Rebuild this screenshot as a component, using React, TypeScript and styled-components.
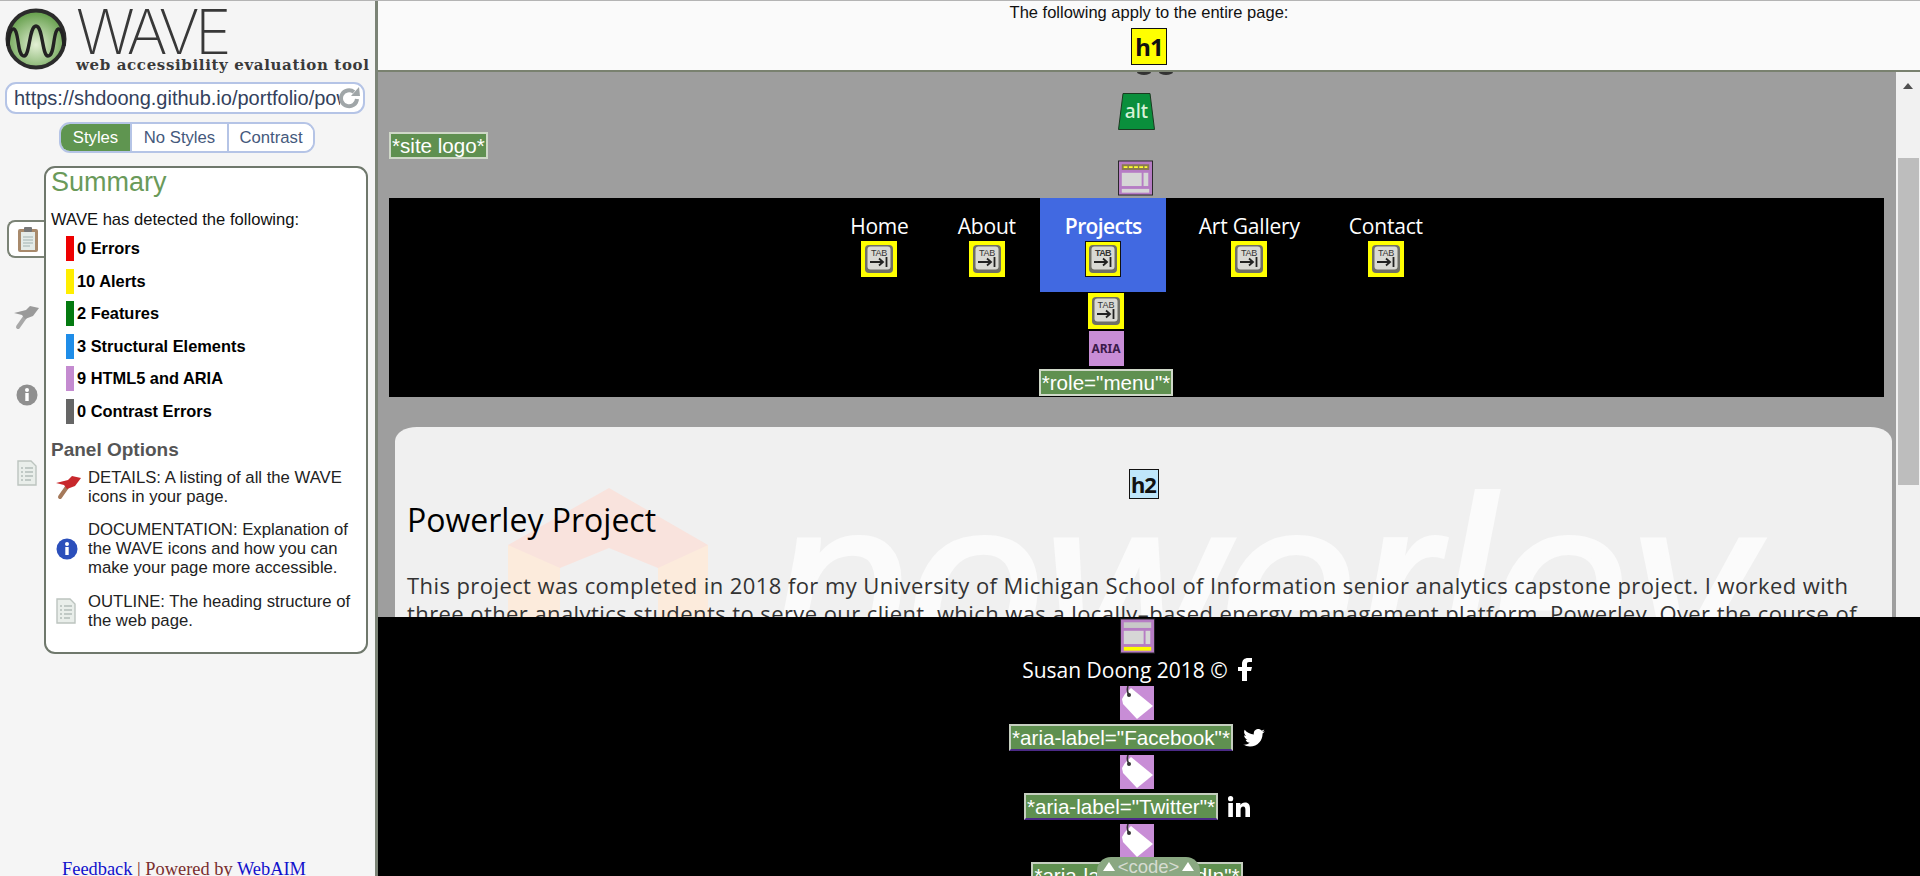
import styled, { createGlobalStyle } from "styled-components";

const GlobalStyle = createGlobalStyle`
	html, body {
		margin: 0;
		padding: 0;
		height: 876px;
		overflow: hidden;
		background: #f5f5f5;
		font-family: "Liberation Sans", Arial, sans-serif;
	}
	* { box-sizing: border-box; }
`;

const Shell = styled.div`
	display: flex;
	height: 876px;
	border-top: 1px solid #b4b4b4;
`;

/* left panel */
const Sidebar = styled.aside`
	width: 378px;
	flex: none;
	display: flex;
	flex-direction: column;
	background: #f5f5f5;
	border-right: 3px solid #7b8376;
`;

const LogoRow = styled.div`
	position: relative;
	height: 81px;
	padding: 7px 0 0 5px;
	flex: none;
`;

const WaveWord = styled.div`
	position: absolute;
	left: 76px;
	top: -4px;
	font-family: Inter, sans-serif;
	font-weight: 250;
	font-size: 62px;
	line-height: 70px;
	letter-spacing: -4.5px;
	color: #383838;
`;

const Tagline = styled.div`
	position: absolute;
	left: 76px;
	top: 54px;
	font-family: "DejaVu Serif", serif;
	font-weight: 700;
	font-size: 15px;
	line-height: 20px;
	letter-spacing: 0.64px;
	white-space: nowrap;
	color: #3a3a3a;
`;

const UrlBox = styled.div`
	position: relative;
	margin-left: 5px;
	width: 360px;
	height: 32px;
	flex: none;
	padding: 0 0 0 7px;
	background: #fff;
	border: 2px solid #b5c4e6;
	border-radius: 11px;
	font-size: 20px;
	line-height: 28px;
	color: #33415c;
	display: flex;
	align-items: center;
`;

const UrlText = styled.span`
	width: 326px;
	overflow: hidden;
	white-space: nowrap;
`;

const ReloadBox = styled.span`
	display: flex;
	width: 24px;
	margin-left: -2px;
`;

const ModeTabs = styled.div`
	display: flex;
	align-self: flex-start;
	margin: 8px 0 0 59px;
	height: 31px;
	flex: none;
	border: 2px solid #b5c4e6;
	border-radius: 11px;
	overflow: hidden;
	background: #fff;
`;

const ModeTab = styled.div<{ $active?: boolean; $w: number }>`
	width: ${(p) => p.$w}px;
	display: flex;
	align-items: center;
	justify-content: center;
	font-size: 16.7px;
	color: ${(p) => (p.$active ? "#fff" : "#45597c")};
	background: ${(p) => (p.$active ? "#5f9550" : "#fff")};
	border-left: ${(p) => (p.$active ? "none" : "2px solid #b5c4e6")};
`;

const PanelRow = styled.div`
	display: flex;
	margin-top: 13px;
	flex: none;
`;

const Rail = styled.div`
	width: 44px;
	flex: none;
	display: flex;
	flex-direction: column;
	align-items: flex-start;
	gap: 40px;
	padding: 54px 0 0 7px;
`;

const RailButton = styled.div<{ $active?: boolean }>`
	width: 39px;
	height: 38px;
	display: flex;
	align-items: center;
	justify-content: center;
	background: ${(p) => (p.$active ? "#fff" : "transparent")};
	border: ${(p) => (p.$active ? "2px solid #7b8376" : "none")};
	border-right: none;
	border-radius: 8px 0 0 8px;
`;

const Panel = styled.section`
	width: 324px;
	height: 488px;
	background: #fff;
	border: 2px solid #6f786c;
	border-radius: 11px;
	padding: 0 5px;
`;

const PanelTitle = styled.h2`
	margin: -1px 0 0;
	font-weight: 400;
	font-size: 27px;
	line-height: 30px;
	color: #6a9a5a;
`;

const Lead = styled.p`
	margin: 13px 0 0;
	font-size: 16.6px;
	line-height: 20px;
	white-space: nowrap;
	color: #111;
`;

const CountList = styled.ul`
	list-style: none;
	margin: 6px 0 0 15px;
	padding: 0;
	display: flex;
	flex-direction: column;
	gap: 7.6px;
`;

const CountRow = styled.li<{ $color: string }>`
	height: 25px;
	padding-left: 3px;
	border-left: 8px solid ${(p) => p.$color};
	font-weight: 700;
	font-size: 16.4px;
	line-height: 25px;
	color: #000;
`;

const OptionsTitle = styled.h3`
	margin: 15px 0 0;
	font-size: 19px;
	line-height: 22px;
	color: #555;
`;

const OptionRow = styled.div`
	display: flex;
	align-items: center;
	margin: 0 0 14.5px 5px;
	font-size: 16.7px;
	line-height: 19px;
	color: #222;
`;

const OptionIcon = styled.div`
	width: 32px;
	flex: none;
	display: flex;
	justify-content: flex-start;
`;

const OptionText = styled.div`
	width: 275px;
`;

const OptionsList = styled.div`
	margin-top: 7px;
`;

const Credit = styled.div`
	margin-top: auto;
	padding: 0 0 0 62px;
	height: 15px;
	font-family: "Liberation Serif", serif;
	font-size: 18.4px;
	line-height: 17px;
	white-space: nowrap;
	color: #7a2e2e;
	a { color: #1111cc; text-decoration: underline; }
`;

/* right side */
const Viewer = styled.main`
	flex: 1;
	min-width: 0;
	display: flex;
	flex-direction: column;
	position: relative;
`;

const TopBar = styled.header`
	height: 71px;
	flex: none;
	display: flex;
	flex-direction: column;
	align-items: center;
	padding-top: 2px;
	background: #fafafa;
	border-bottom: 2px solid #79816f;
	font-size: 16.5px;
	line-height: 19px;
	color: #111;
`;

const HeadingMark = styled.div<{ $level: 1 | 2 }>`
	display: flex;
	align-items: center;
	justify-content: center;
	font-family: "Noto Sans", sans-serif;
	font-weight: 700;
	color: #111;
	border: 1px solid #111;
	width: ${(p) => (p.$level === 1 ? 36 : 30)}px;
	height: ${(p) => (p.$level === 1 ? 37 : 30)}px;
	font-size: ${(p) => (p.$level === 1 ? 24 : 22)}px;
	letter-spacing: -1px;
	background: ${(p) => (p.$level === 1 ? "#ffff00" : "#bfe6fa")};
`;

const TopMark = styled.div`
	margin-top: 6px;
`;

const Middle = styled.div`
	flex: 1;
	min-height: 0;
	display: flex;
`;

const Page = styled.div`
	flex: 1;
	min-width: 0;
	overflow: hidden;
	background: #9e9e9e;
	padding: 0 12px 0 11px;
`;

const Masthead = styled.div`
	position: relative;
	height: 126px;
	display: flex;
	flex-direction: column;
	align-items: center;
`;

const ClippedDots = styled.div`
	display: flex;
	gap: 8px;
	height: 3px;
	margin: 0 0 18px 36px;
	overflow: hidden;
`;

const Dot = styled.span`
	display: block;
	width: 14px;
	height: 6px;
	margin-top: -3px;
	background: #333;
	border-radius: 50%;
`;

const LogoLabel = styled.span`
	position: absolute;
	left: 0;
	top: 60px;
`;

const MarkStack = styled.div`
	display: flex;
	flex-direction: column;
	gap: 30px;
`;

const Label = styled.span<{ $link?: boolean }>`
	display: inline-block;
	height: 27px;
	padding: 0 1px;
	background: #5f9050;
	border: 2px solid ${(p) => (p.$link ? "#c6cfc0" : "#cfd8c8")};
	border-bottom-color: ${(p) => (p.$link ? "#4b2a86" : "#cfd8c8")};
	color: #fff;
	font-family: "Liberation Sans", sans-serif;
	font-size: 20.6px;
	line-height: 23px;
	white-space: nowrap;
`;

const Nav = styled.nav`
	height: 199px;
	background: #000;
	display: flex;
	flex-direction: column;
	align-items: center;
`;

const Menu = styled.ul`
	list-style: none;
	display: flex;
	margin: 0;
	padding: 0;
`;

const MenuItem = styled.li<{ $current?: boolean }>`
	height: 94px;
	padding: 14px 24.5px 0;
	display: flex;
	flex-direction: column;
	align-items: center;
	margin-right: ${(p) => (p.$current ? 8 : 0)}px;
	background: ${(p) => (p.$current ? "#4169e1" : "transparent")};
	color: #fff;
	font-family: "Open Sans", sans-serif;
	font-size: 21px;
	letter-spacing: ${(p) => (p.$current ? -0.6 : -0.2)}px;
	line-height: 29px;
	font-weight: ${(p) => (p.$current ? 600 : 400)};
	white-space: nowrap;
`;

const MenuAfter = styled.div`
	display: flex;
	flex-direction: column;
	align-items: center;
	margin-right: 61px;
	padding-top: 1px;
`;

const AriaMark = styled.div`
	width: 35px;
	height: 35px;
	margin: 2px 0 3px;
	display: flex;
	align-items: center;
	justify-content: center;
	background: #c88dd6;
	font-family: "Noto Sans", sans-serif;
	font-weight: 700;
	font-size: 12px;
	color: #3b1a4a;
`;

const Card = styled.article`
	position: relative;
	overflow: hidden;
	margin: 30px -8px 0 6px;
	padding: 42px 12px 0;
	height: 400px;
	background: #f0f0f0;
	border-radius: 22px 22px 0 0 / 14px 14px 0 0;
`;

const Watermark = styled.div`
	position: absolute;
	left: 376px;
	top: 37px;
	font-family: "Liberation Sans", sans-serif;
	font-style: italic;
	font-size: 245px;
	line-height: 240px;
	color: #fbfbfb;
	-webkit-text-stroke: 4px #fbfbfb;
`;

const House = styled.svg`
	position: absolute;
	left: 113px;
	top: 61px;
`;

const CardHead = styled.div`
	position: relative;
	display: flex;
	justify-content: center;
`;

const CardTitle = styled.h2`
	position: relative;
	margin: -1px 0 0;
	font-family: "Open Sans", sans-serif;
	font-weight: 400;
	font-size: 32px;
	line-height: 44px;
	color: #000;
`;

const CardBody = styled.p`
	position: relative;
	margin: 29px 0 0;
	font-family: "Open Sans", sans-serif;
	font-size: 22px;
	letter-spacing: 0.42px;
	line-height: 28px;
	color: #333;
`;

const ScrollTrack = styled.div`
	position: relative;
	width: 24px;
	flex: none;
	background: #f1f1f1;
`;

const ScrollArrow = styled.div`
	position: absolute;
	left: 7px;
	top: 11px;
	width: 0;
	height: 0;
	border-left: 5.5px solid transparent;
	border-right: 5.5px solid transparent;
	border-bottom: 6px solid #505050;
`;

const ScrollThumb = styled.div`
	position: absolute;
	left: 2px;
	top: 86px;
	width: 21px;
	height: 327px;
	background: #bdbdbd;
`;

const Footer = styled.footer`
	position: relative;
	height: 259px;
	flex: none;
	overflow: hidden;
	background: #000;
	padding-right: 24px;
	display: flex;
	flex-direction: column;
	align-items: center;
	color: #fff;
	font-family: "Open Sans", sans-serif;
	font-size: 21px;
	> * { flex: none; }
`;

const FooterMark = styled.div`
	height: 35px;
	margin-top: 1px;
`;

const FooterLine = styled.div`
	display: flex;
	align-items: center;
	justify-content: center;
	gap: 10px;
	height: 33px;
	white-space: nowrap;
`;

const LabelLine = styled(FooterLine)`
	height: 35px;
`;

const CodePill = styled.div`
	position: absolute;
	left: 719px;
	bottom: 0;
	width: 103px;
	height: 19px;
	display: flex;
	align-items: center;
	justify-content: center;
	gap: 3px;
	background: #8aa882;
	border-radius: 14px 14px 0 0;
	color: #d6dcd2;
	font-family: "Liberation Sans", sans-serif;
	font-size: 18.5px;
`;

const PillArrow = styled.span`
	width: 0;
	height: 0;
	border-left: 6px solid transparent;
	border-right: 6px solid transparent;
	border-bottom: 9px solid #fff;
`;

function WaveLogo() {
	return (
		<svg width="62" height="62" viewBox="0 0 62 62">
			<defs>
				<radialGradient id="wv" cx="0.5" cy="0.6" r="0.6">
					<stop offset="0" stopColor="#e3f0d5" />
					<stop offset="1" stopColor="#5f9b45" />
				</radialGradient>
			</defs>
			<circle cx="31" cy="31" r="28.5" fill="url(#wv)" stroke="#2b2b2b" strokeWidth="4" />
			<path
				d="M3 38 C4 22 8 17 11 24 C14 32 13 48 19 48 C25 48 24 18 31 18 C38 18 37 48 43 48 C49 48 48 32 51 24 C54 17 58 22 59 38"
				fill="none"
				stroke="#222"
				strokeWidth="3.4"
			/>
		</svg>
	);
}

function ReloadIcon() {
	return (
		<svg width="24" height="24" viewBox="0 0 24 24" fill="none">
			<path d="M19 13 A8 8 0 1 1 16 6" stroke="#a0a6a8" strokeWidth="4" />
			<path d="M13 10 L22 10 L21 1 Z" fill="#a0a6a8" />
		</svg>
	);
}

function Clipboard() {
	return (
		<svg width="22" height="27" viewBox="0 0 22 27">
			<rect x="1" y="3" width="20" height="23" rx="2" fill="#a88a6c" />
			<rect x="4" y="6" width="14" height="18" fill="#e4ebe8" />
			<rect x="7" y="1" width="8" height="5" rx="1" fill="#777" />
			<path d="M6 11h10M6 14h10M6 17h10M6 20h7" stroke="#9fb2b0" strokeWidth="1.2" />
		</svg>
	);
}

function FlagIcon({ color, stick }: { color: string; stick: string }) {
	return (
		<svg width="26" height="26" viewBox="0 0 26 26">
			<path d="M4 23 L11 13" stroke={stick} strokeWidth="4" strokeLinecap="round" />
			<path d="M0 9 L12 6 L16 2 L25 4 L19 12 L11 15 L8 11 Z" fill={color} />
		</svg>
	);
}

function InfoIcon({ color }: { color: string }) {
	return (
		<svg width="22" height="22" viewBox="0 0 22 22">
			<circle cx="11" cy="11" r="10.5" fill={color} />
			<circle cx="11" cy="6" r="2" fill="#fff" />
			<rect x="9.300" y="9" width="3.400" height="8" fill="#fff" />
		</svg>
	);
}

function OutlineIcon() {
	return (
		<svg width="20" height="26" viewBox="0 0 20 26">
			<path d="M1 1 H14 L19 6 V25 H1 Z" fill="#e9eeea" stroke="#bcc4bf" strokeWidth="1.4" />
			<path d="M4 8h2M8 8h8M4 12h2M8 12h8M4 16h2M8 16h8M4 20h2M8 20h6" stroke="#98a4a0" strokeWidth="1.2" />
		</svg>
	);
}

function TabMark({ outlined }: { outlined?: boolean }) {
	return (
		<svg width="36" height="36" viewBox="0 0 36 36" style={{ display: "block" }}>
			<rect x="0.5" y="0.5" width="35" height="35" fill="#ffff00" stroke={outlined ? "#111" : "#ffff00"} />
			<rect x="4" y="4" width="28" height="28" rx="4" fill="#6f6f66" />
			<rect x="6.500" y="5.500" width="23" height="23" rx="3" fill="#d9d9d4" />
			<text x="18" y="14.500" textAnchor="middle" fontFamily="Liberation Sans" fontSize="9" fill="#333">
				TAB
			</text>
			<path d="M9 21 H21 M18 17.500 L22 21 L18 24.500 M25.500 16 V26" stroke="#222" strokeWidth="1.8" fill="none" />
		</svg>
	);
}

function AltMark() {
	return (
		<svg width="37" height="37" viewBox="0 0 37 37" style={{ display: "block" }}>
			<path d="M5 0.5 H32 L36.5 36.5 H0.5 Z" fill="#0a8f3c" stroke="#1a3a20" />
			<text x="18.5" y="25" textAnchor="middle" fontFamily="Noto Sans" fontWeight="500" fontSize="19" fill="#d8f3d8">
				alt
			</text>
		</svg>
	);
}

function StructureMark({ footer }: { footer?: boolean }) {
	return (
		<svg width="35" height="36" viewBox="0 0 37 37" style={{ display: "block" }}>
			<rect x="0.5" y="0.5" width="36" height="36" fill="#b67cc4" stroke="#222" />
			<rect x="4" y="4" width="29" height="6" fill={footer ? "#c8c8c8" : "#8a7a50"} />
			<rect x="4" y="13" width="21" height="14" fill="#d6d6d6" />
			<rect x="27" y="13" width="5" height="14" fill="#d6d6d6" />
			<rect x="4" y="30" width="29" height="4" fill={footer ? "#ffff00" : "#d6d6d6"} />
			{!footer && <path d="M6 7h25" stroke="#ffff30" strokeWidth="1.6" strokeDasharray="4 1.5" />}
		</svg>
	);
}

function TagMark() {
	return (
		<svg width="34" height="34" viewBox="0 0 34 34" style={{ display: "block" }}>
			<rect width="34" height="34" fill="#c88dd6" />
			<path d="M2 13 L5 8 L11 2 L33 20 L17 33 L3 18 Z" fill="#fff" />
			<circle cx="9" cy="9" r="2" fill="#333" />
			<path d="M9 9 C7 6 7 3 8 0" stroke="#333" strokeWidth="1.6" fill="none" />
		</svg>
	);
}

function FacebookGlyph() {
	return (
		<svg width="14" height="23" viewBox="0 0 14 23">
			<path d="M4 23 V13 H0 V9 H4 V6 C4 2 6.500 0 10 0 H14 V4 H11 C9.500 4 9 4.700 9 6 V9 H14 L13 13 H9 V23 Z" fill="#fff" />
		</svg>
	);
}

function TwitterGlyph() {
	return (
		<svg width="22" height="18" viewBox="0 0 24 20">
			<path
				d="M24 2.400 c-.9.4-1.800.7-2.800.8 1-.6 1.800-1.600 2.200-2.700-1 .6-2 1-3.100 1.200A4.900 4.900 0 0 0 11.900 6.200C7.800 6 4.200 4 1.700.9c-1.300 2.200-.7 5.100 1.500 6.600-.8 0-1.600-.2-2.200-.6 0 2.400 1.700 4.400 3.900 4.900-.7.2-1.500.2-2.200.1.600 1.900 2.400 3.300 4.600 3.400A9.900 9.900 0 0 1 0 17.300 13.900 13.900 0 0 0 7.500 19.500c9.100 0 14.300-7.700 14-14.600 1-.7 1.800-1.500 2.500-2.500z"
				fill="#fff"
			/>
		</svg>
	);
}

function LinkedinGlyph() {
	return (
		<svg width="22" height="21" viewBox="0 0 22 21">
			<rect x="0.300" y="7" width="4.600" height="14" fill="#fff" />
			<circle cx="2.600" cy="2.700" r="2.600" fill="#fff" />
			<path d="M8 7 H12.400 V9 C13.200 7.700 14.800 6.600 17 6.600 C20.800 6.600 22 9 22 12.800 V21 H17.400 V13.700 C17.400 12 17 10.600 15.200 10.600 C13.400 10.600 12.600 12 12.600 13.700 V21 H8 Z" fill="#fff" />
		</svg>
	);
}

const counts = [
	{ color: "#ee0000", text: "0 Errors" },
	{ color: "#ffee00", text: "10 Alerts" },
	{ color: "#047a10", text: "2 Features" },
	{ color: "#1f8de8", text: "3 Structural Elements" },
	{ color: "#c48bd0", text: "9 HTML5 and ARIA" },
	{ color: "#666666", text: "0 Contrast Errors" },
];

const menu = ["Home", "About", "Projects", "Art Gallery", "Contact"];

export default function App() {
	return (
		<>
			<GlobalStyle />
			<Shell>
				<Sidebar>
					<LogoRow>
						<WaveLogo />
						<WaveWord>WAVE</WaveWord>
						<Tagline>web accessibility evaluation tool</Tagline>
					</LogoRow>
					<UrlBox>
						<UrlText>https://shdoong.github.io/portfolio/powerley</UrlText>
						<ReloadBox>
							<ReloadIcon />
						</ReloadBox>
					</UrlBox>
					<ModeTabs>
						<ModeTab $active $w={69}>
							Styles
						</ModeTab>
						<ModeTab $w={97}>No Styles</ModeTab>
						<ModeTab $w={86}>Contrast</ModeTab>
					</ModeTabs>
					<PanelRow>
						<Rail>
							<RailButton $active>
								<Clipboard />
							</RailButton>
							<RailButton>
								<FlagIcon color="#9a9a9a" stick="#a8a8a8" />
							</RailButton>
							<RailButton>
								<InfoIcon color="#8f8f8f" />
							</RailButton>
							<RailButton>
								<OutlineIcon />
							</RailButton>
						</Rail>
						<Panel>
							<PanelTitle>Summary</PanelTitle>
							<Lead>WAVE has detected the following:</Lead>
							<CountList>
								{counts.map((c) => (
									<CountRow key={c.text} $color={c.color}>
										{c.text}
									</CountRow>
								))}
							</CountList>
							<OptionsTitle>Panel Options</OptionsTitle>
							<OptionsList>
								<OptionRow>
									<OptionIcon>
										<FlagIcon color="#c8282c" stick="#a5795a" />
									</OptionIcon>
									<OptionText>DETAILS: A listing of all the WAVE icons in your page.</OptionText>
								</OptionRow>
								<OptionRow>
									<OptionIcon>
										<InfoIcon color="#2b4fbb" />
									</OptionIcon>
									<OptionText>
										DOCUMENTATION: Explanation of the WAVE icons and how you can make your page more accessible.
									</OptionText>
								</OptionRow>
								<OptionRow>
									<OptionIcon>
										<OutlineIcon />
									</OptionIcon>
									<OptionText>OUTLINE: The heading structure of the web page.</OptionText>
								</OptionRow>
							</OptionsList>
						</Panel>
					</PanelRow>
					<Credit>
						<a>Feedback</a> | Powered by <a>WebAIM</a>
					</Credit>
				</Sidebar>

				<Viewer>
					<TopBar>
						The following apply to the entire page:
						<TopMark>
							<HeadingMark $level={1}>h1</HeadingMark>
						</TopMark>
					</TopBar>
					<Middle>
						<Page>
							<Masthead>
								<ClippedDots>
									<Dot />
									<Dot />
								</ClippedDots>
								<MarkStack>
									<AltMark />
									<StructureMark />
								</MarkStack>
								<LogoLabel>
									<Label>*site logo*</Label>
								</LogoLabel>
							</Masthead>
							<Nav>
								<Menu>
									{menu.map((m) => (
										<MenuItem key={m} $current={m === "Projects"}>
											{m}
											<TabMark outlined={m === "Projects"} />
										</MenuItem>
									))}
								</Menu>
								<MenuAfter>
									<TabMark />
									<AriaMark>ARIA</AriaMark>
									<Label>*role="menu"*</Label>
								</MenuAfter>
							</Nav>
							<Card>
								<House width="202" height="130" viewBox="0 0 202 130">
									<path d="M0 57 H52 V130 H0 Z M150 57 H200 V130 H150 Z" fill="#fcebdc" />
									<path d="M101 0 L200 57 L150 80 L101 60 L52 80 L0 57 Z" fill="#f9e3dd" />
								</House>
								<Watermark>powerley</Watermark>
								<CardHead>
									<HeadingMark $level={2}>h2</HeadingMark>
								</CardHead>
								<CardTitle>Powerley Project</CardTitle>
								<CardBody>
									This project was completed in 2018 for my University of Michigan School of Information senior analytics capstone project. I worked with three other analytics students to serve our client, which was a locally–based energy management platform, Powerley. Over the course of
								</CardBody>
							</Card>
						</Page>
						<ScrollTrack>
							<ScrollArrow />
							<ScrollThumb />
						</ScrollTrack>
					</Middle>
					<Footer>
						<FooterMark>
							<StructureMark footer />
						</FooterMark>
						<FooterLine>
							Susan Doong 2018 © <FacebookGlyph />
						</FooterLine>
						<TagMark />
						<LabelLine>
							<Label $link>*aria-label="Facebook"*</Label>
							<TwitterGlyph />
						</LabelLine>
						<TagMark />
						<LabelLine>
							<Label $link>*aria-label="Twitter"*</Label>
							<LinkedinGlyph />
						</LabelLine>
						<TagMark />
						<LabelLine>
							<Label $link>*aria-label="LinkedIn"*</Label>
						</LabelLine>
						<CodePill>
							<PillArrow />
							&lt;code&gt;
							<PillArrow />
						</CodePill>
					</Footer>
				</Viewer>
			</Shell>
		</>
	);
}
